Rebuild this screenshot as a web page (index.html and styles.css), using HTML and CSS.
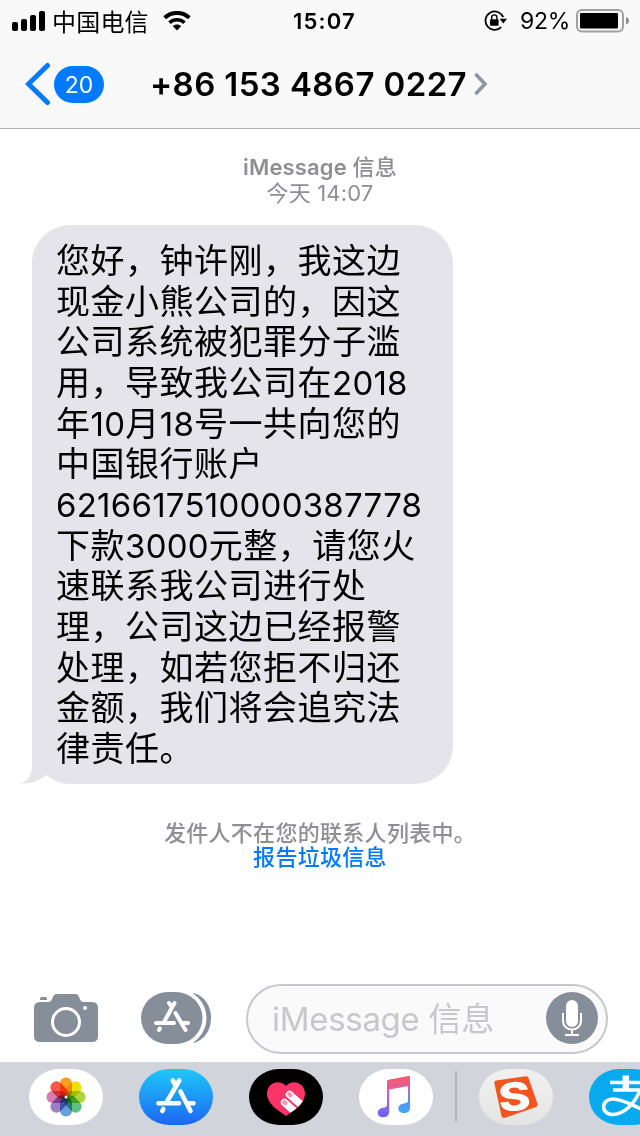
FILE: index.html
```html
<!DOCTYPE html>
<html lang="zh-CN">
<head>
    <meta charset="UTF-8">
    <meta name="viewport" content="width=device-width, initial-scale=1.0">
    <title>信息</title>
    <link rel="stylesheet" href="styles.css">
</head>
<body>
    <div class="phone">
        <header class="header">
            <div class="status-bar">
                <div class="status-left">
                    <svg class="signal" width="34" height="21" viewBox="0 0 34 21">
                        <rect x="0" y="11" width="6" height="9" rx="2"/>
                        <rect x="9" y="8" width="6" height="12" rx="2"/>
                        <rect x="18" y="4" width="6" height="16" rx="2"/>
                        <rect x="27" y="0" width="6" height="20" rx="2"/>
                    </svg>
                    <span class="carrier">中国电信</span>
                    <svg class="wifi" width="28" height="20" viewBox="0 0 28 20">
                        <path d="M1.700 6.800C8.500 .3 19.500 .3 26.300 6.800" fill="none" stroke="#000" stroke-width="4"/>
                        <path d="M6.500 11.600C10.700 7.700 17.300 7.700 21.500 11.600" fill="none" stroke="#000" stroke-width="3.600"/>
                        <path d="M9.700 15C12.200 12.900 15.800 12.900 18.300 15L14 19.500Z"/>
                    </svg>
                </div>
                <span class="clock">15:07</span>
                <div class="status-right">
                    <svg class="rotation-lock" width="24" height="22" viewBox="0 0 24 22">
                        <path d="M19.200 7.200A9.200 9.200 0 1 0 17.200 17.200" fill="none" stroke="#000" stroke-width="1.800"/>
                        <path d="M15.600 8.700H23L19.300 13.400Z"/>
                        <rect x="6" y="9.300" width="8.600" height="6.500" rx=".8"/>
                        <path d="M7.700 10V7.500a2.600 2.600 0 0 1 5.200 0V10" fill="none" stroke="#000" stroke-width="1.400"/>
                    </svg>
                    <span class="percent">92%</span>
                    <svg class="battery" width="54" height="24" viewBox="0 0 54 24">
                        <rect x="1" y="1" width="46" height="21.500" rx="5" fill="none" stroke="#a0a0a0" stroke-width="2"/>
                        <rect x="4" y="4" width="38" height="15.500" rx="1"/>
                        <path d="M50 8c4 1.500 4 6 0 7.500Z" fill="#8c8c8c"/>
                    </svg>
                </div>
            </div>
            <div class="nav-bar">
                <svg class="back" width="26" height="44" viewBox="0 0 26 44">
                    <path d="M22.500 3.500L3.500 22L22.500 40.500" fill="none" stroke="#007aff" stroke-width="5" stroke-linecap="round"/>
                </svg>
                <span class="unread">20</span>
                <h1 class="contact">+86 153 4867 0227</h1>
                <svg class="chevron" width="16" height="24" viewBox="0 0 16 24">
                    <path d="M3.500 3L12 12L3.500 21" fill="none" stroke="#8e959f" stroke-width="3.600" stroke-linecap="round"/>
                </svg>
            </div>
        </header>

        <main class="conversation">
            <div class="timestamp">
                <div class="service">iMessage <span class="service-cn">信息</span></div>
                <div class="date">今天 <span class="time">14:07</span></div>
            </div>

            <div class="bubble">
                您好，钟许刚，我这边<br>
                现金小熊公司的，因这<br>
                公司系统被犯罪分子滥<br>
                用，导致我公司在<span class="num">2018</span><br>
                年<span class="num">10</span>月<span class="num">18</span>号一共向您的<br>
                中国银行账户<br>
                <span class="num">6216617510000387778</span><br>
                下款<span class="num">3000</span>元整，请您火<br>
                速联系我公司进行处<br>
                理，公司这边已经报警<br>
                处理，如若您拒不归还<br>
                金额，我们将会追究法<br>
                律责任。
                <svg class="tail" width="34" height="40" viewBox="0 0 34 40">
                    <path d="M11 0V22C11 31 7 37 0 39.500C10 39.500 18 37 24 32L30 28L20 10Z" fill="#e5e4ea"/>
                </svg>
            </div>

            <div class="notice">
                <div class="notice-text">发件人不在您的联系人列表中。</div>
                <div class="report">报告垃圾信息</div>
            </div>
        </main>

        <div class="composer">
            <svg class="camera" width="64" height="48" viewBox="0 0 64 48">
                <path d="M6 8H14C20 8 17 0 23 0H41C47 0 44 8 50 8H58Q64 8 64 14V42Q64 48 58 48H6Q0 48 0 42V14Q0 8 6 8Z" fill="#868e99"/>
                <path d="M6 6V4.500Q6 3 7.500 3H11.500Q13 3 13 4.500V6Z" fill="#868e99"/>
                <circle cx="32" cy="28" r="13.500" fill="none" stroke="#fff" stroke-width="3"/>
                <circle cx="51" cy="14" r="2" fill="#fff"/>
            </svg>
            <svg class="apps-button" width="70" height="52" viewBox="0 0 70 52">
                <path d="M52 1C76 6 76 46 52 51Z" fill="#868e99"/>
                <rect x="-4" y="-3" width="69.500" height="58" rx="29" fill="#fff"/>
                <rect x="0" y="0" width="61.500" height="52" rx="27" ry="26" fill="#868e99"/>
                <g fill="none" stroke="#fff" stroke-width="4" stroke-linecap="round">
                    <path d="M33.500 11L22.500 31M28 11L31 15.500M34.500 21L44.500 38M15 31H33M41.500 31H47M18.800 36.500L18 38"/>
                </g>
            </svg>
            <div class="message-field">
                <span class="placeholder">iMessage 信息</span>
                <svg class="mic" width="52" height="52" viewBox="0 0 52 52">
                    <circle cx="26" cy="26" r="26" fill="#868e99"/>
                    <rect x="20" y="8" width="12" height="27" rx="6" fill="#fff"/>
                    <path d="M17 21V28.500C17 40.500 35 40.500 35 28.500V21M26 37.500V43M19 43H33" fill="none" stroke="#fff" stroke-width="2"/>
                </svg>
            </div>
        </div>

        <footer class="app-strip">
            <svg class="app" viewBox="0 0 74 56">
                <rect width="74" height="56" rx="30" ry="28" fill="#fff"/>
                <g class="petals" transform="translate(37 28)">
                    <rect x="-6" y="-19.500" width="12" height="19.500" rx="5.800" fill="#fb9d20"/>
                    <rect x="-6" y="-19.500" width="12" height="19.500" rx="5.800" fill="#f0e000" transform="rotate(45)"/>
                    <rect x="-6" y="-19.500" width="12" height="19.500" rx="5.800" fill="#acd53a" transform="rotate(90)"/>
                    <rect x="-6" y="-19.500" width="12" height="19.500" rx="5.800" fill="#5cc084" transform="rotate(135)"/>
                    <rect x="-6" y="-19.500" width="12" height="19.500" rx="5.800" fill="#669fe0" transform="rotate(180)"/>
                    <rect x="-6" y="-19.500" width="12" height="19.500" rx="5.800" fill="#9a80c4" transform="rotate(225)"/>
                    <rect x="-6" y="-19.500" width="12" height="19.500" rx="5.800" fill="#d67db2" transform="rotate(270)"/>
                    <rect x="-6" y="-19.500" width="12" height="19.500" rx="5.800" fill="#f8594e" transform="rotate(315)"/>
                </g>
                <circle cx="37" cy="28" r="1.500" fill="#fff"/>
            </svg>
            <svg class="app" viewBox="0 0 74 56">
                <defs>
                    <linearGradient id="store" x1="0" y1="0" x2="0" y2="1">
                        <stop offset="0" stop-color="#1fc8fa"/>
                        <stop offset="1" stop-color="#1d66f2"/>
                    </linearGradient>
                </defs>
                <rect width="74" height="56" rx="30" ry="28" fill="url(#store)"/>
                <path d="M40.300 11.500L27.500 33.500M33.800 11.500L37 17M41.500 22.500L51.500 42M19.500 34.300H40M48 34.300H54.500M24.300 40L23.300 42" fill="none" stroke="#fff" stroke-width="4.600" stroke-linecap="round"/>
            </svg>
            <svg class="app" viewBox="0 0 74 56">
                <defs>
                    <clipPath id="heart">
                        <path d="M37 17C31 10 18 13 18 25C18 35 30 42 37 47C44 42 56 35 56 25C56 13 43 10 37 17Z"/>
                    </clipPath>
                </defs>
                <rect width="74" height="56" rx="30" ry="28"/>
                <g clip-path="url(#heart)">
                    <rect width="74" height="56" fill="#fc3468"/>
                    <path d="M40.500 25.500L58 41M35.500 33.500L53 49" stroke="#fff" stroke-width="7.500" stroke-linecap="round"/>
                    <path d="M40.300 25.200L41.500 26.200M35.300 33.200L36.500 34.200" stroke="#ff8fab" stroke-width="4" stroke-linecap="round"/>
                </g>
            </svg>
            <svg class="app" viewBox="0 0 74 56">
                <defs>
                    <linearGradient id="music" gradientUnits="userSpaceOnUse" x1="38" y1="8" x2="38" y2="48">
                        <stop offset="0" stop-color="#f85a70"/>
                        <stop offset=".3" stop-color="#e0609a"/>
                        <stop offset=".55" stop-color="#9b68f5"/>
                        <stop offset="1" stop-color="#6a62f8"/>
                    </linearGradient>
                    <linearGradient id="music-right" gradientUnits="userSpaceOnUse" x1="38" y1="8" x2="38" y2="44">
                        <stop offset="0" stop-color="#f85a70"/>
                        <stop offset=".3" stop-color="#c46ab8"/>
                        <stop offset=".65" stop-color="#5c8cf4"/>
                        <stop offset="1" stop-color="#3fa9f8"/>
                    </linearGradient>
                </defs>
                <rect width="74" height="56" rx="30" ry="28" fill="#fff"/>
                <path d="M49 8H51V39C51 42 48.500 44 45 44C41.500 44 39.300 42.200 39.300 39.500C39.300 36.500 42 35 45 34.500C48 34 49 33.500 49 31Z" fill="url(#music-right)"/>
                <path d="M28 12.500Q28 11 29.500 10.700L49.500 7Q51 6.800 51 8.200V16.700L30.200 20.500V42.500C30.200 46 27.500 48.300 24 48.300C20.800 48.300 18.700 46.300 18.700 43.700C18.700 41 21 39.300 24 38.800C27 38.300 28 37.800 28 35Z" fill="url(#music)"/>
            </svg>
            <div class="divider"></div>
            <svg class="app" viewBox="0 0 74 56">
                <defs>
                    <linearGradient id="paper" x1="0" y1="0" x2="0" y2="1">
                        <stop offset="0" stop-color="#f1f1f1"/>
                        <stop offset="1" stop-color="#e4e4e4"/>
                    </linearGradient>
                </defs>
                <rect width="74" height="56" rx="30" ry="28" fill="url(#paper)"/>
                <path d="M17 11.500L47 7.200Q49 7 49.500 9L58.500 35Q59 37 57 38L26 48.800Q23 49.300 22.500 47L15.300 14Q15 12 17 11.500Z" fill="#f4551f"/>
                <text class="sogou" transform="translate(20.500 43) rotate(-5) scale(1.250 1)">S</text>
            </svg>
            <svg class="app" viewBox="0 0 74 56">
                <rect width="74" height="56" rx="30" ry="28" fill="#08a9ef"/>
                <path d="M36.800 6.500V21" fill="none" stroke="#fff" stroke-width="6.500"/>
                <path d="M21 13.500H55M24 21H51C49 27 45 33 40 38C34 43.500 29 45.500 24 45.500C11.500 45.500 11.500 30.500 23.500 30C34 29.500 45 38 60 43" fill="none" stroke="#fff" stroke-width="3.600"/>
            </svg>
        </footer>
    </div>
</body>
</html>
```
FILE: styles.css
```css
body{
    margin: 0;
    background-color: #ffffff;
    font-family: "Inter", "Noto Sans CJK SC", sans-serif;
    color: black;
}

svg{
    display: block;
    flex-shrink: 0;
}

.phone{
    display: flex;
    flex-direction: column;
    width: 640px;
    height: 1136px;
    overflow: hidden;
}

.header{
    height: 128px;
    background-color: #f9f9f9;
    border-bottom: 1px solid #b2b2b2;
}

.status-bar{
    display: grid;
    grid-template-columns: 280px 89px 271px;
    align-items: center;
    height: 40px;
}

.status-left{
    display: flex;
    align-items: center;
    padding-left: 12px;
}

.carrier{
    margin-left: 6px;
    font-family: "Noto Sans CJK SC", sans-serif;
    font-size: 24px;
    line-height: 38px;
    letter-spacing: 0.2px;
    white-space: nowrap;
}

.wifi{
    margin-left: 14px;
}

.clock{
    text-align: center;
    font-size: 22px;
    font-weight: 600;
    letter-spacing: 1.2px;
    line-height: 42px;
}

.status-right{
    display: flex;
    align-items: center;
    justify-content: flex-end;
    padding-right: 10px;
}

.percent{
    margin-left: 12px;
    margin-right: 6px;
    font-size: 23px;
    letter-spacing: -0.3px;
    line-height: 42px;
}

.nav-bar{
    display: flex;
    align-items: center;
    height: 88px;
    padding-left: 25px;
}

.unread{
    width: 50px;
    height: 37px;
    margin-left: 3px;
    border-radius: 19px;
    background-color: #007aff;
    color: white;
    font-size: 23px;
    line-height: 38px;
    text-align: center;
}

.contact{
    margin: 0 0 0 46px;
    width: 320px;
    font-size: 33px;
    font-weight: 600;
    letter-spacing: 0.4px;
    line-height: 44px;
    white-space: nowrap;
}

.chevron{
    margin-left: 3px;
}

.conversation{
    flex: 1;
}

.timestamp{
    margin-top: 25px;
    color: #8e8e93;
    font-size: 22px;
    letter-spacing: 0.15px;
    line-height: 26px;
    text-align: center;
}

.service{
    font-weight: 600;
}

.service-cn{
    font-weight: 500;
}

.bubble{
    position: relative;
    box-sizing: border-box;
    width: 421px;
    height: 559px;
    margin: 19px 0 0 32px;
    padding: 14px 0 0 24px;
    border-radius: 38px;
    background-color: #e5e4ea;
    font-family: "Noto Sans CJK SC", sans-serif;
    font-size: 34px;
    letter-spacing: 0.5px;
    line-height: 40.67px;
    white-space: nowrap;
}

.num{
    font-family: "Inter", sans-serif;
    font-size: 33px;
    letter-spacing: 0.25px;
    line-height: 1;
}

/* little hook at the bottom left of the bubble */
.tail{
    position: absolute;
    left: -11px;
    bottom: 0;
}

.notice{
    margin-top: 35px;
    font-family: "Noto Sans CJK SC", sans-serif;
    font-size: 22px;
    font-weight: 500;
    letter-spacing: 0.3px;
    line-height: 24px;
    text-align: center;
    color: #8e8e93;
}

.report{
    color: #007aff;
}

.composer{
    display: flex;
    align-items: center;
    height: 70px;
    padding: 0 32px 8px 34px;
}

.camera{
    margin-top: -2px;
}

.apps-button{
    margin-top: -2px;
    margin-left: 43px;
}

.message-field{
    display: flex;
    flex: 1;
    align-items: center;
    justify-content: space-between;
    box-sizing: border-box;
    height: 70px;
    margin-left: 35px;
    padding: 0 8px 0 24px;
    border: 2px solid #c7c7cc;
    border-radius: 35px;
    background-color: #fafafa;
}

.placeholder{
    color: #c7c7cc;
    font-size: 33px;
    letter-spacing: -0.3px;
    line-height: 44px;
    white-space: nowrap;
}

.mic{
    margin-top: -2px;
}

.app-strip{
    display: flex;
    align-items: center;
    height: 74px;
    gap: 36px;
    padding-left: 29px;
    padding-bottom: 5px;
    box-sizing: border-box;
    background-color: #d1d4da;
}

.app{
    width: 74px;
    height: 56px;
}

.petals{
    isolation: isolate;
}

.petals rect{
    mix-blend-mode: multiply;
}

.divider{
    flex-shrink: 0;
    width: 2px;
    height: 51px;
    margin: 0 -14px;
    background-color: #b1b4ba;
}

.sogou{
    fill: white;
    font-family: "Inter", sans-serif;
    font-size: 39px;
    font-weight: 800;
}
```
